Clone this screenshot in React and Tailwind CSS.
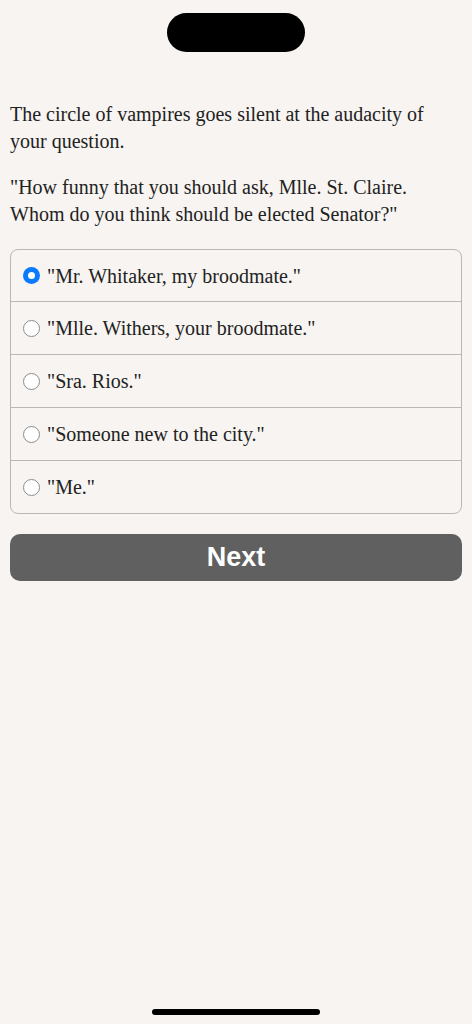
const options = [
  '"Mr. Whitaker, my broodmate."',
  '"Mlle. Withers, your broodmate."',
  '"Sra. Rios."',
  '"Someone new to the city."',
  '"Me."',
]

// Radio dot, blue when chosen
function Radio({ checked }) {
  if (checked) {
    return (
      <span className="flex h-[17px] w-[17px] shrink-0 items-center justify-center rounded-full bg-[#0a7aff]">
        <span className="h-[7px] w-[7px] rounded-full bg-white" />
      </span>
    )
  }
  return <span className="h-[17px] w-[17px] shrink-0 rounded-full border-[1.5px] border-[#8c8c8c] bg-white" />
}

export default function App() {
  const selected = 0
  return (
    <div className="flex min-h-[1024px] flex-col bg-[#f7f4f1] text-[#222] [font-family:'Liberation_Serif',serif]">
      {/* dynamic island */}
      <div className="flex justify-center pt-[13px]">
        <div className="h-[39px] w-[138px] rounded-full bg-black" />
      </div>

      <div className="flex flex-col px-[10px] pt-[49px]">
        <p className="text-[20px] leading-[27px]">
          The circle of vampires goes silent at the audacity of your question.
        </p>
        <p className="mt-[19px] text-[20px] leading-[27px]">
          "How funny that you should ask, Mlle. St. Claire. Whom do you think should be elected Senator?"
        </p>

        <div className="mt-[21px] flex flex-col rounded-[8px] border border-[#b8b8b8]">
          {options.map((o, i) => (
            <div
              key={o}
              className={
                'flex items-center gap-[7px] pl-[12px] ' +
                (i > 0 ? 'h-[53px] border-t border-[#b8b8b8]' : 'h-[51px]')
              }
            >
              <Radio checked={i === selected} />
              <span className="text-[20px] leading-none">{o}</span>
            </div>
          ))}
        </div>

        <button className="mt-[20px] h-[47px] w-full rounded-[10px] bg-[#616060] text-[27px] font-bold text-white [font-family:'Liberation_Sans',sans-serif]">
          Next
        </button>
      </div>

      <div className="flex-1" />
      {/* home indicator */}
      <div className="flex justify-center pb-[9px]">
        <div className="h-[6px] w-[168px] rounded-full bg-black" />
      </div>
    </div>
  )
}
